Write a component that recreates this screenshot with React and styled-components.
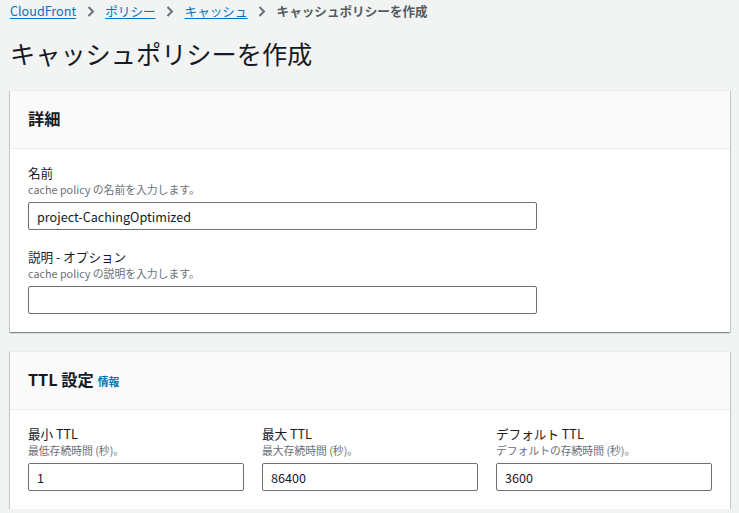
import React from "react";
import styled, { createGlobalStyle } from "styled-components";

const Global = createGlobalStyle`
  html, body { margin: 0; padding: 0; background: #f2f3f3; }
  body { font-family: "Noto Sans CJK JP", "Noto Sans", sans-serif; color: #16191f; }
  * { box-sizing: border-box; }
`;

const Page = styled.div`
  padding: 2px 9px 0 10px;
  width: 739px;
`;

const Crumbs = styled.nav`
  display: flex;
  align-items: center;
  height: 18px;
  font-size: 12.6px;
  line-height: 18px;
`;

const CrumbLink = styled.a`
  color: #0073bb;
  text-decoration: underline;
  text-underline-offset: 2px;
  cursor: pointer;
`;

const CrumbCurrent = styled.span`
  color: #545b64;
  font-weight: 700;
`;

const Sep = styled.span`
  width: 29px;
  display: flex;
  justify-content: center;
  align-items: center;
  height: 18px;
`;

const Title = styled.h1`
  margin: 17px 0 0;
  font-size: 25.2px;
  line-height: 33px;
  font-weight: 400;
  color: #16191f;
`;

const Card = styled.section`
  margin-top: ${(p) => p.$mt}px;
  background: #fff;
  border-top: 1px solid #eaeded;
  box-shadow: 0 1px 1px 0 rgba(0, 28, 36, 0.3), 1px 1px 1px 0 rgba(0, 28, 36, 0.15),
    -1px 1px 1px 0 rgba(0, 28, 36, 0.15);
`;

const CardHeader = styled.div`
  background: #fafafa;
  padding: 16px 18px 19px;
  border-bottom: 1px solid #eaeded;
  display: flex;
  align-items: baseline;
  gap: 4px;
`;

const CardTitle = styled.h2`
  margin: 0;
  font-size: 16.2px;
  line-height: 22px;
  font-weight: 700;
  color: #16191f;
`;

const InfoLink = styled.a`
  color: #0073bb;
  font-size: 10.8px;
  font-weight: 700;
  cursor: pointer;
`;

const CardBody = styled.div`
  padding: 15px 18px 18px;
  display: flex;
  flex-direction: column;
  gap: 18px;
`;

const Grid = styled.div`
  display: grid;
  grid-template-columns: repeat(3, 1fr);
  gap: 18px;
`;

const Field = styled.div`
  display: flex;
  flex-direction: column;
  max-width: ${(p) => (p.$max ? `${p.$max}px` : "none")};
`;

const Label = styled.label`
  font-size: 12.6px;
  line-height: 18px;
  color: #16191f;
`;

const Desc = styled.div`
  font-size: 10.8px;
  line-height: 15px;
  color: #687078;
`;

const Input = styled.input`
  margin-top: 5px;
  height: 28px;
  width: 100%;
  border: 1px solid #687078;
  border-radius: 2px;
  padding: 0 8px;
  font-family: "Noto Sans CJK JP", "Noto Sans", sans-serif;
  font-size: 12.6px;
  color: #16191f;
  background: #fff;
  outline: none;
`;

const Chevron = () => (
  <svg width="8" height="11" viewBox="0 0 8 11" fill="none">
    <polyline points="1.5,1 6,5.5 1.5,10" stroke="#687078" strokeWidth="2" />
  </svg>
);

export default function App() {
  return (
    <>
      <Global />
      <Page>
        <Crumbs>
          <CrumbLink>CloudFront</CrumbLink>
          <Sep><Chevron /></Sep>
          <CrumbLink>ポリシー</CrumbLink>
          <Sep><Chevron /></Sep>
          <CrumbLink>キャッシュ</CrumbLink>
          <Sep><Chevron /></Sep>
          <CrumbCurrent>キャッシュポリシーを作成</CrumbCurrent>
        </Crumbs>
        <Title>キャッシュポリシーを作成</Title>

        <Card $mt={20}>
          <CardHeader>
            <CardTitle>詳細</CardTitle>
          </CardHeader>
          <CardBody>
            <Field $max={509}>
              <Label>名前</Label>
              <Desc>cache policy の名前を入力します。</Desc>
              <Input defaultValue="project-CachingOptimized" />
            </Field>
            <Field $max={509}>
              <Label>説明 - オプション</Label>
              <Desc>cache policy の説明を入力します。</Desc>
              <Input defaultValue="" />
            </Field>
          </CardBody>
        </Card>

        <Card $mt={19}>
          <CardHeader>
            <CardTitle>TTL 設定</CardTitle>
            <InfoLink>情報</InfoLink>
          </CardHeader>
          <CardBody>
            <Grid>
              <Field>
                <Label>最小 TTL</Label>
                <Desc>最低存続時間 (秒)。</Desc>
                <Input defaultValue="1" />
              </Field>
              <Field>
                <Label>最大 TTL</Label>
                <Desc>最大存続時間 (秒)。</Desc>
                <Input defaultValue="86400" />
              </Field>
              <Field>
                <Label>デフォルト TTL</Label>
                <Desc>デフォルトの存続時間 (秒)。</Desc>
                <Input defaultValue="3600" />
              </Field>
            </Grid>
          </CardBody>
        </Card>
      </Page>
    </>
  );
}
